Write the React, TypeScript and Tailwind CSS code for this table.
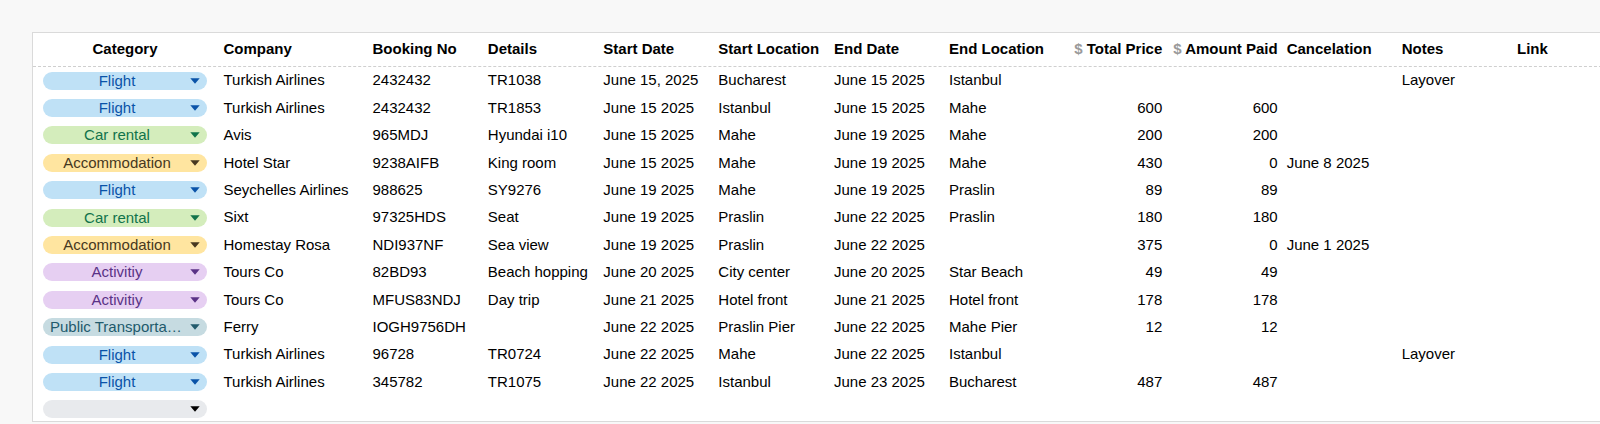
import React from "react";

type Cat = "Flight" | "Car rental" | "Accommodation" | "Activitiy" | "Public Transportation" | "";

const pillStyles: Record<string, { bg: string; text: string; arrow: string }> = {
  Flight: { bg: "bg-[#bfe1f6]", text: "text-[#0a53a8]", arrow: "fill-[#0a53a8]" },
  "Car rental": { bg: "bg-[#d4edbc]", text: "text-[#11734b]", arrow: "fill-[#11734b]" },
  Accommodation: { bg: "bg-[#ffe5a0]", text: "text-[#473821]", arrow: "fill-[#473821]" },
  Activitiy: { bg: "bg-[#e6cff2]", text: "text-[#5a3286]", arrow: "fill-[#5a3286]" },
  "Public Transportation": { bg: "bg-[#c6dbe1]", text: "text-[#215a6c]", arrow: "fill-[#215a6c]" },
  "": { bg: "bg-[#e8eaed]", text: "text-black", arrow: "fill-black" },
};

type Row = {
  cat: Cat;
  company?: string;
  booking?: string;
  details?: string;
  startDate?: string;
  startLoc?: string;
  endDate?: string;
  endLoc?: string;
  total?: string;
  paid?: string;
  cancel?: string;
  notes?: string;
};

const rows: Row[] = [
  { cat: "Flight", company: "Turkish Airlines", booking: "2432432", details: "TR1038", startDate: "June 15, 2025", startLoc: "Bucharest", endDate: "June 15 2025", endLoc: "Istanbul", notes: "Layover" },
  { cat: "Flight", company: "Turkish Airlines", booking: "2432432", details: "TR1853", startDate: "June 15 2025", startLoc: "Istanbul", endDate: "June 15 2025", endLoc: "Mahe", total: "600", paid: "600" },
  { cat: "Car rental", company: "Avis", booking: "965MDJ", details: "Hyundai i10", startDate: "June 15 2025", startLoc: "Mahe", endDate: "June 19 2025", endLoc: "Mahe", total: "200", paid: "200" },
  { cat: "Accommodation", company: "Hotel Star", booking: "9238AIFB", details: "King room", startDate: "June 15 2025", startLoc: "Mahe", endDate: "June 19 2025", endLoc: "Mahe", total: "430", paid: "0", cancel: "June 8 2025" },
  { cat: "Flight", company: "Seychelles Airlines", booking: "988625", details: "SY9276", startDate: "June 19 2025", startLoc: "Mahe", endDate: "June 19 2025", endLoc: "Praslin", total: "89", paid: "89" },
  { cat: "Car rental", company: "Sixt", booking: "97325HDS", details: "Seat", startDate: "June 19 2025", startLoc: "Praslin", endDate: "June 22 2025", endLoc: "Praslin", total: "180", paid: "180" },
  { cat: "Accommodation", company: "Homestay Rosa", booking: "NDI937NF", details: "Sea view", startDate: "June 19 2025", startLoc: "Praslin", endDate: "June 22 2025", endLoc: "", total: "375", paid: "0", cancel: "June 1 2025" },
  { cat: "Activitiy", company: "Tours Co", booking: "82BD93", details: "Beach hopping", startDate: "June 20 2025", startLoc: "City center", endDate: "June 20 2025", endLoc: "Star Beach", total: "49", paid: "49" },
  { cat: "Activitiy", company: "Tours Co", booking: "MFUS83NDJ", details: "Day trip", startDate: "June 21 2025", startLoc: "Hotel front", endDate: "June 21 2025", endLoc: "Hotel front", total: "178", paid: "178" },
  { cat: "Public Transportation", company: "Ferry", booking: "IOGH9756DH", details: "", startDate: "June 22 2025", startLoc: "Praslin Pier", endDate: "June 22 2025", endLoc: "Mahe Pier", total: "12", paid: "12" },
  { cat: "Flight", company: "Turkish Airlines", booking: "96728", details: "TR0724", startDate: "June 22 2025", startLoc: "Mahe", endDate: "June 22 2025", endLoc: "Istanbul", notes: "Layover" },
  { cat: "Flight", company: "Turkish Airlines", booking: "345782", details: "TR1075", startDate: "June 22 2025", startLoc: "Istanbul", endDate: "June 23 2025", endLoc: "Bucharest", total: "487", paid: "487" },
  { cat: "" },
];

function Pill({ cat }: { cat: Cat }) {
  const s = pillStyles[cat];
  return (
    <div className={`ml-[10px] flex h-[18px] w-[164px] items-center rounded-full pl-[7px] pr-[7px] ${s.bg}`}>
      <span className={`min-w-0 flex-1 truncate text-center leading-[18px] ${s.text}`}>{cat}</span>
      <svg className={`ml-[6px] h-[6px] w-[10px] shrink-0 ${s.arrow}`} viewBox="0 0 10 6">
        <path d="M0.3 0.3 L9.7 0.3 L5 5.7 Z" />
      </svg>
    </div>
  );
}

const W = {
  cat: "w-[186px]",
  company: "w-[149px]",
  booking: "w-[115.3px]",
  details: "w-[115.5px]",
  startDate: "w-[115px]",
  startLoc: "w-[115.7px]",
  endDate: "w-[115px]",
  endLoc: "w-[115.3px]",
  total: "w-[107px]",
  paid: "w-[115.4px]",
  cancel: "w-[115px]",
  notes: "w-[115.3px]",
  link: "w-[115.3px]",
};

function Cell({ w, children, right }: { w: string; children?: React.ReactNode; right?: boolean }) {
  return (
    <div className={`${w} shrink-0 truncate whitespace-nowrap px-[4.5px] ${right ? "text-right" : "text-left"}`}>
      {children}
    </div>
  );
}

export default function App() {
  return (
    <div
      className="h-[424px] w-[1600px] overflow-hidden bg-[#f8f8f8] pl-[32px] pt-[32px] text-[15px] text-black"
      style={{ fontFamily: '"Liberation Sans", Arial, Helvetica, sans-serif' }}
    >
      <div className="h-[390px] w-[1620px] border-l border-t border-b border-[#dadada] bg-white">
        <div className="flex h-[34px] items-center border-b border-dashed border-[#cfcfcf] font-bold">
          <div className={`${W.cat} shrink-0`}>
            <div className="ml-[10px] w-[164px] text-center">Category</div>
          </div>
          <Cell w={W.company}>Company</Cell>
          <Cell w={W.booking}>Booking No</Cell>
          <Cell w={W.details}>Details</Cell>
          <Cell w={W.startDate}>Start Date</Cell>
          <Cell w={W.startLoc}>Start Location</Cell>
          <Cell w={W.endDate}>End Date</Cell>
          <Cell w={W.endLoc}>End Location</Cell>
          <Cell w={W.total} right>
            <span className="text-[#9a9a9a]">$</span> Total Price
          </Cell>
          <Cell w={W.paid} right>
            <span className="text-[#9a9a9a]">$</span> Amount Paid
          </Cell>
          <Cell w={W.cancel}>Cancelation</Cell>
          <Cell w={W.notes}>Notes</Cell>
          <Cell w={W.link}>Link</Cell>
        </div>
        {rows.map((r, i) => (
          <div key={i} className="flex h-[27.4px] items-center">
            <div className={`${W.cat} shrink-0`}>
              <Pill cat={r.cat} />
            </div>
            <Cell w={W.company}>{r.company}</Cell>
            <Cell w={W.booking}>{r.booking}</Cell>
            <Cell w={W.details}>{r.details}</Cell>
            <Cell w={W.startDate}>{r.startDate}</Cell>
            <Cell w={W.startLoc}>{r.startLoc}</Cell>
            <Cell w={W.endDate}>{r.endDate}</Cell>
            <Cell w={W.endLoc}>{r.endLoc}</Cell>
            <Cell w={W.total} right>{r.total}</Cell>
            <Cell w={W.paid} right>{r.paid}</Cell>
            <Cell w={W.cancel}>{r.cancel}</Cell>
            <Cell w={W.notes}>{r.notes}</Cell>
            <Cell w={W.link}></Cell>
          </div>
        ))}
      </div>
    </div>
  );
}
